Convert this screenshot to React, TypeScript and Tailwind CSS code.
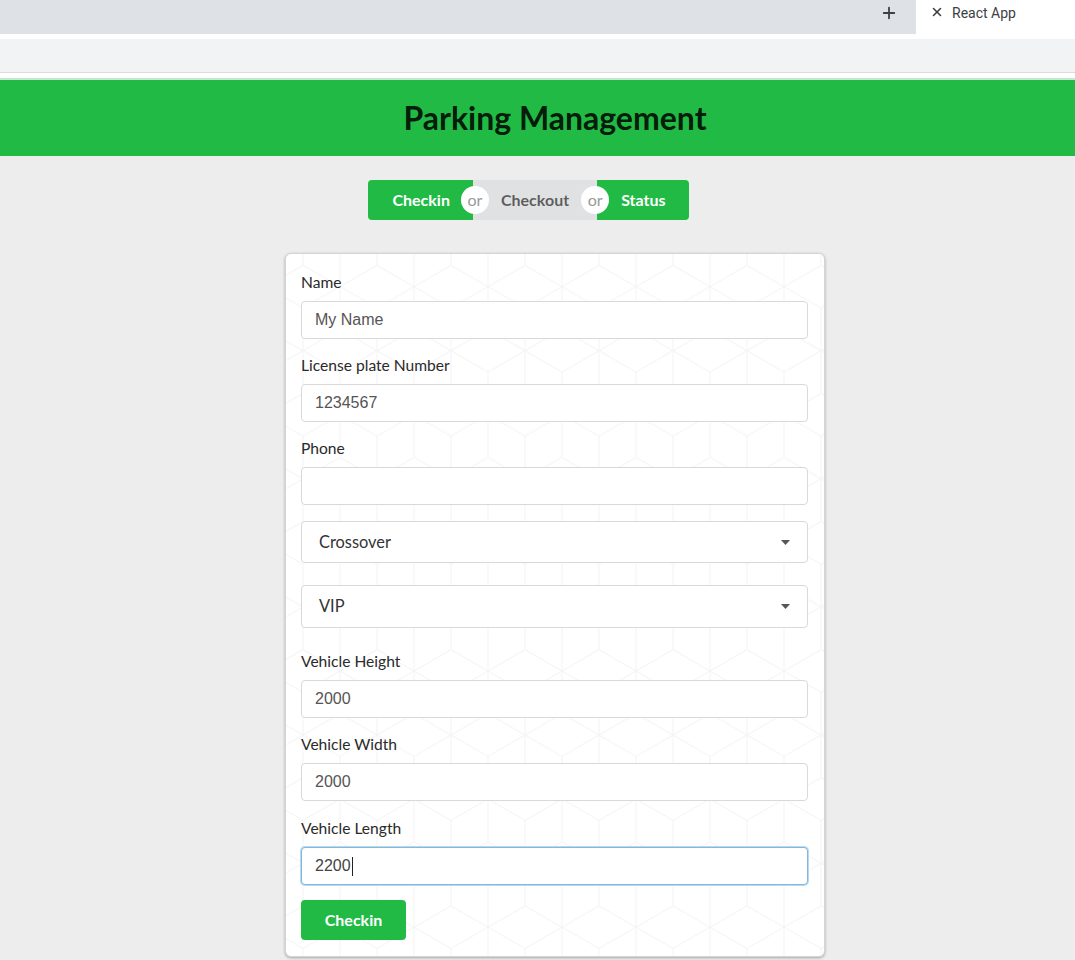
import { Plus, X } from "lucide-react";

const W = 74;
const S = 42.7;

const hex = (cx: number, cy: number) =>
  `M${cx} ${cy - S} L${cx + W / 2} ${cy - S / 2} L${cx + W / 2} ${cy + S / 2} L${cx} ${cy + S} L${cx - W / 2} ${cy + S / 2} L${cx - W / 2} ${cy - S / 2} Z ` +
  `M${cx - W / 2} ${cy - S / 2} L${cx} ${cy} L${cx + W / 2} ${cy - S / 2} M${cx} ${cy} L${cx} ${cy + S} `;

const cubes = [
  [0, 0],
  [W, 0],
  [W / 2, 1.5 * S],
  [0, 3 * S],
  [W, 3 * S],
]
  .map(([x, y]) => hex(x, y))
  .join("");

const CubePattern = () => (
  <svg className="pointer-events-none absolute inset-0 h-full w-full" aria-hidden>
    <defs>
      <pattern id="cubes" width={W} height={3 * S} patternUnits="userSpaceOnUse" x={-20} y={-10}>
        <path d={cubes} fill="none" stroke="#f4f4f4" strokeWidth="1" />
      </pattern>
    </defs>
    <rect width="100%" height="100%" fill="url(#cubes)" />
  </svg>
);

type FieldProps = {
  label: string;
  value?: string;
  className?: string;
};

const Field = ({ label, value = "", className }: FieldProps) => (
  <div className={className ?? "mb-4"}>
    <div className="mb-[9px] text-[15.6px] leading-5 text-[#2a2a2a]">{label}</div>
    <input
      readOnly
      defaultValue={value}
      className="block h-[38px] w-full rounded border border-[#d9d9d9] bg-white px-[13px] font-['Liberation_Sans',Arial,sans-serif] text-base text-[#555] outline-none"
    />
  </div>
);

const Select = ({ value, className }: { value: string; className: string }) => (
  <div
    className={`flex items-center justify-between rounded border border-[#d9d9d9] bg-white pr-[17px] pl-[17px] text-[16.4px] text-[#333] ${className}`}
  >
    <span>{value}</span>
    <svg width="9" height="5" viewBox="0 0 9 5">
      <path d="M0 0 L9 0 L4.5 5 Z" fill="#555" />
    </svg>
  </div>
);

const Or = ({ className }: { className: string }) => (
  <span className={`relative z-10 w-0 ${className}`}>
    <span className="absolute top-1/2 left-1/2 flex h-7 w-7 -translate-x-1/2 -translate-y-1/2 items-center justify-center rounded-full bg-white pb-px text-[16px] font-normal text-[#999]">
      or
    </span>
  </span>
);

export default function App() {
  return (
    <div className="min-h-screen bg-[#ededed] font-['Lato','Open_Sans',sans-serif]">
      {/* browser chrome */}
      <div className="flex h-[34px] bg-[#dee1e6]">
        <div className="flex flex-1 items-start justify-end rounded-br-lg pt-[4px] pr-[18px]">
          <Plus className="h-[18px] w-[18px] text-[#3c4043]" strokeWidth={2.4} />
        </div>
        <div className="flex w-[159px] items-start gap-[8px] bg-white pt-[3px] pl-[14px] font-['Roboto',sans-serif] text-sm text-[#3c4043]">
          <X className="mt-[2px] h-[14px] w-[14px]" strokeWidth={2.6} />
          React App
        </div>
      </div>
      <div className="h-[5px] bg-white" />
      <div className="h-[34px] border-b border-[#dcdcdc] bg-[#f1f3f4]" />
      <div className="h-[5px] bg-white" />
      <div className="h-[2px] bg-[#c3e8cb]" />

      {/* header */}
      <div className="flex h-[76px] items-center justify-center bg-[#21ba45] pl-[35px]">
        <h1 className="text-[32px] font-bold text-[rgba(0,0,0,0.87)]">Parking Management</h1>
      </div>

      {/* nav */}
      <div className="mt-[24px] flex justify-center pr-[18px]">
        <div className="flex h-10 text-[16px] font-bold">
          <button className="rounded-l bg-[#21ba45] pr-[23px] pl-6 text-white">Checkin</button>
          <Or className="left-[2px]" />
          <button className="bg-[#e0e1e2] px-[28px] text-[rgba(0,0,0,0.6)]">Checkout</button>
          <Or className="-left-[2px]" />
          <button className="rounded-r bg-[#21ba45] pr-[23px] pl-6 text-white">Status</button>
        </div>
      </div>

      {/* form card */}
      <div className="mt-[33px] flex justify-center pl-[35px]">
        <div className="relative w-[540px] rounded-md border border-[#d4d4d5] bg-white shadow-[0_1px_3px_0_rgba(0,0,0,0.3)]">
          <CubePattern />
          <div className="relative pt-[18px] pr-[16px] pb-[16px] pl-[15px]">
            <Field label="Name" value="My Name" />
            <Field label="License plate Number" value="1234567" />
            <Field label="Phone" />
            <Select value="Crossover" className="mb-[22px] h-[42px]" />
            <Select value="VIP" className="mb-[23px] h-[43px]" />
            <Field label="Vehicle Height" value="2000" />
            <Field label="Vehicle Width" value="2000" className="mb-[17px]" />
            <div className="mb-[15px]">
              <div className="mb-[9px] text-[15.6px] leading-5 text-[#2a2a2a]">Vehicle Length</div>
              <div className="flex h-[38px] items-center rounded border border-[#85b7d9] bg-white px-[13px] font-['Liberation_Sans',Arial,sans-serif] text-base text-[#444] shadow-[0_0_0_1px_#b9d8f2]">
                2200
                <span className="ml-px h-[19px] w-px bg-[#222]" />
              </div>
            </div>
            <button className="h-10 w-[105px] rounded bg-[#21ba45] text-[16px] font-bold text-white">
              Checkin
            </button>
          </div>
        </div>
      </div>
    </div>
  );
}
